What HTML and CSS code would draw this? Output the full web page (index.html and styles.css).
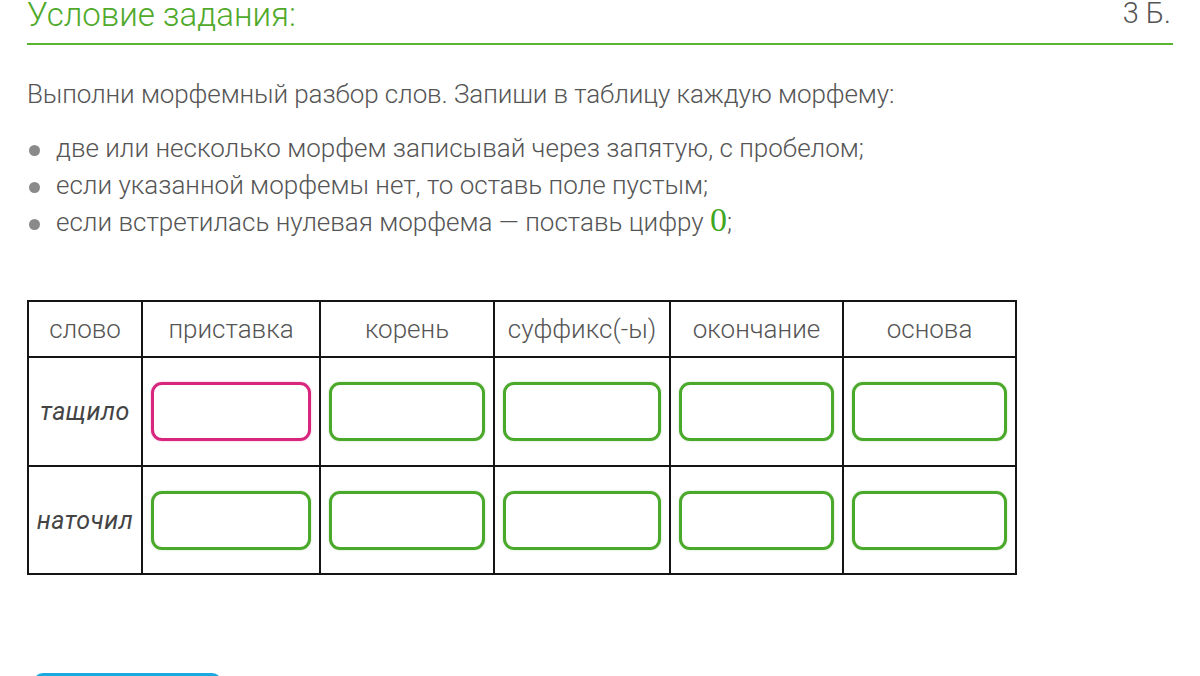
FILE: index.html
```html
<!DOCTYPE html>
<html lang="ru">
<head>
<meta charset="utf-8">
<link rel="stylesheet" href="styles.css">
</head>
<body>
<div class="page">
  <div class="head">
    <h1 class="title">Условие задания:</h1>
    <span class="points">3 Б.</span>
  </div>
  <p class="lead">Выполни морфемный разбор слов. Запиши в таблицу каждую морфему:</p>
  <ul class="rules">
    <li>две или несколько морфем записывай через запятую, с пробелом;</li>
    <li>если указанной морфемы нет, то оставь поле пустым;</li>
    <li>если встретилась нулевая морфема — поставь цифру <span class="zero">0</span>;</li>
  </ul>
  <table class="morph">
    <colgroup>
      <col class="c0"><col class="c1"><col class="c2"><col class="c3"><col class="c4"><col class="c5">
    </colgroup>
    <thead>
      <tr class="hrow">
        <th>слово</th><th>приставка</th><th>корень</th><th>суффикс(-ы)</th><th>окончание</th><th>основа</th>
      </tr>
    </thead>
    <tbody>
      <tr class="row r1">
        <td class="word">тащило</td>
        <td><div class="box active"></div></td>
        <td><div class="box"></div></td>
        <td><div class="box"></div></td>
        <td><div class="box"></div></td>
        <td><div class="box"></div></td>
      </tr>
      <tr class="row r2">
        <td class="word">наточил</td>
        <td><div class="box"></div></td>
        <td><div class="box"></div></td>
        <td><div class="box"></div></td>
        <td><div class="box"></div></td>
        <td><div class="box"></div></td>
      </tr>
    </tbody>
  </table>
  <div class="actions">
    <button class="submit" type="button">Проверить</button>
  </div>
</div>
</body>
</html>
```
FILE: styles.css
```css
html, body {
  margin: 0;
  padding: 0;
  background: #fff;
  overflow: hidden;
}
body {
  font-family: Roboto, "Noto Sans", sans-serif;
  font-weight: 300;
  color: #555;
}
.page {
  width: 1146px;
  margin-left: 27px;
}
.head {
  display: flex;
  justify-content: space-between;
  align-items: flex-start;
  border-bottom: 2px solid #5cb531;
  height: 43px;
}
.title {
  margin: -3px 0 0 0;
  font-size: 33px;
  font-weight: 300;
  color: #4fa92a;
  line-height: 36px;
}
.points {
  margin-top: -5px;
  font-size: 29px;
  color: #555;
  line-height: 36px;
  padding-right: 2px;
}
.lead {
  margin: 33px 0 0 0;
  font-size: 26px;
  line-height: 32px;
  letter-spacing: -0.1px;
}
.rules {
  list-style: none;
  margin: 20px 0 0 0;
  padding: 0;
}
.rules li {
  font-size: 26px;
  line-height: 37px;
  position: relative;
  padding-left: 29px;
}
.rules li::before {
  content: "";
  position: absolute;
  left: 2px;
  top: 15px;
  width: 11px;
  height: 11px;
  border-radius: 50%;
  background: #8a8a8a;
}
.zero {
  font-family: "Liberation Serif", serif;
  color: #3fa61f;
  font-size: 34px;
  font-weight: 400;
  line-height: 20px;
}
.morph {
  margin-top: 59px;
  border-collapse: collapse;
  table-layout: fixed;
  width: 989px;
}
.c0 { width: 114px; }
.c1 { width: 178px; }
.c2 { width: 174px; }
.c3 { width: 176px; }
.c4 { width: 173px; }
.c5 { width: 173px; }
.morph th, .morph td {
  border: 2px solid #151515;
  padding: 0 8px;
  text-align: center;
}
.morph th {
  height: 54px;
  font-size: 26px;
  font-weight: 300;
  color: #555;
}
.r1 td {
  height: 107px;
}
.r2 td {
  height: 106px;
}
.word {
  font-style: italic;
  font-weight: 400;
  font-size: 25px;
  letter-spacing: 0.5px;
  color: #444;
  padding: 0 !important;
}
.box {
  height: 53px;
  border: 3px solid #4aa82a;
  border-radius: 11px;
  background: #fff;
  box-shadow: 0 0 2px rgba(74, 168, 42, 0.4);
}
.box.active {
  border-color: #d8267f;
  box-shadow: 0 0 2px rgba(216, 38, 127, 0.4);
}
.actions {
  margin-top: 98px;
  padding-left: 6px;
}
.submit {
  width: 189px;
  height: 48px;
  border: none;
  border-radius: 10px;
  background: #1ca9e1;
  color: #fff;
  font-family: Roboto, sans-serif;
  font-size: 22px;
  padding-top: 14px;
}
```
